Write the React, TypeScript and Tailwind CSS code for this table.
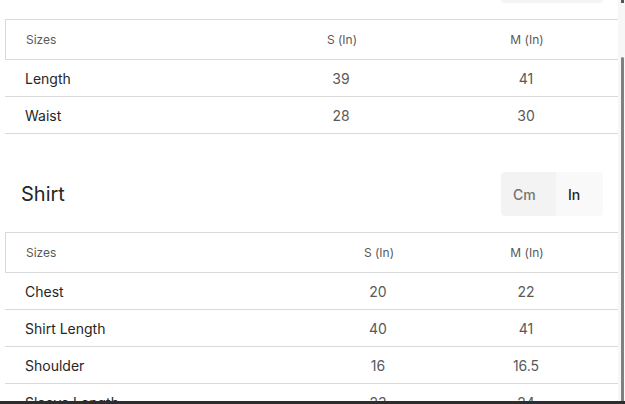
import React from 'react';

type Row = { label: string; s: string; m: string };

const pantsRows: Row[] = [
  { label: 'Length', s: '39', m: '41' },
  { label: 'Waist', s: '28', m: '30' },
];

const shirtRows: Row[] = [
  { label: 'Chest', s: '20', m: '22' },
  { label: 'Shirt Length', s: '40', m: '41' },
  { label: 'Shoulder', s: '16', m: '16.5' },
  { label: 'Sleeve Length', s: '23', m: '24' },
];

const SizeTable: React.FC<{ rows: Row[]; cols: string }> = ({ rows, cols }) => (
  <div className="ml-[5px] w-[613px]">
    <div className={`grid ${cols} h-[41px] items-center border-t border-b border-l border-[#d9d9d9] text-[12px] text-[#595959]`}>
      <div className="pl-5">Sizes</div>
      <div className="text-center">S (In)</div>
      <div className="text-center">M (In)</div>
    </div>
    {rows.map((row) => (
      <div key={row.label} className={`grid ${cols} h-[37px] items-center border-b border-[#d9d9d9] text-[14px]`}>
        <div className="pl-5 text-[#262626]">{row.label}</div>
        <div className="text-center text-[#595959]">{row.s}</div>
        <div className="text-center text-[#595959]">{row.m}</div>
      </div>
    ))}
  </div>
);

const UnitToggle = () => (
  <div className="flex h-[44px] overflow-hidden rounded-[4px] text-[14px] font-medium">
    <div className="flex w-[55px] items-center bg-[#f3f3f3] pl-3 text-[#737373]">Cm</div>
    <div className="flex w-[47px] items-center bg-[#f9f9f9] pl-3 text-[#262626]">In</div>
  </div>
);

export default function App() {
  return (
    <div className="flex h-[404px] w-[625px] flex-col overflow-hidden bg-white" style={{ fontFamily: 'Inter, "Noto Sans", sans-serif' }}>
      <div className="flex min-h-0 flex-1">
        <div className="w-[618px] overflow-hidden">
          {/* bottom edge of previous toggle */}
          <div className="flex justify-end pr-[15px]">
            <div className="h-[3px] w-[102px] rounded-b-[4px] bg-[#f4f4f4]" />
          </div>

          <div className="mt-4">
            <SizeTable rows={pantsRows} cols="grid-cols-[243px_186px_184px]" />
          </div>

          <div className="mt-[38px] flex items-center justify-between pl-[21px] pr-[15px]">
            <h2 className="text-[20px] font-normal text-[#262626]">Shirt</h2>
            <UnitToggle />
          </div>

          <div className="mt-[16px]">
            <SizeTable rows={shirtRows} cols="grid-cols-[317px_112px_184px]" />
          </div>
        </div>

        {/* scrollbar */}
        <div className="flex w-[7px] bg-[#f7f7f7]">
          <div className="ml-[3px] flex w-[3px] flex-col">
            <div className="h-[3px] bg-[#555]" />
            <div className="h-[54px]" />
            <div className="flex-1 rounded-t-[2px] bg-[#808080]" />
          </div>
        </div>
      </div>
      <div className="h-[3px] bg-[#2d2d2d]" />
    </div>
  );
}
